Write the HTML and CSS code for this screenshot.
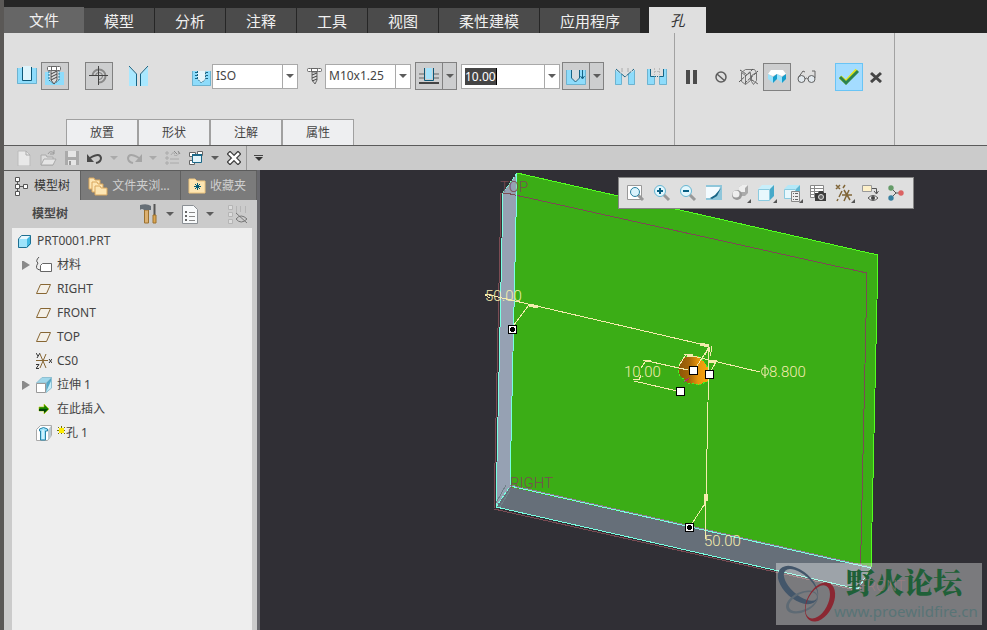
FILE: index.html
```html
<!DOCTYPE html>
<html lang="zh-CN">
<head>
<meta charset="utf-8">
<title>PRT0001</title>
<link rel="stylesheet" href="styles.css">
</head>
<body>
<nav class="menu">
  <button class="menu-tab file">文件</button>
  <button class="menu-tab">模型</button>
  <button class="menu-tab">分析</button>
  <button class="menu-tab">注释</button>
  <button class="menu-tab">工具</button>
  <button class="menu-tab">视图</button>
  <button class="menu-tab wide">柔性建模</button>
  <button class="menu-tab wide">应用程序</button>
  <button class="menu-tab current">孔</button>
</nav>

<section class="ribbon">
  <div class="panel options">
    <div class="controls">
      <div class="group kinds">
        <button class="tool" aria-label="简单孔"><svg width="20" height="20"><path d="M0 2h20v16H0z" fill="#8edcfb"/><path d="M6 0h8v14H6z" fill="#dff4fb"/><path d="M.5 2v15.500h19V2" fill="none" stroke="#6db3d0"/><path d="M5.500 1v13.500h9V1" fill="none" stroke="#0d5878"/></svg></button>
        <button class="tool framed" aria-label="标准孔"><svg width="20" height="20"><path d="M0 6h19v13H0z" fill="#8edcfb"/><path d="M4 5v9l5 4 5-4V5" fill="#eee" stroke="#176485" stroke-dasharray="2 1"/><path d="M6 4h6v10l-3 4-3-4z" fill="#ddd" stroke="#555"/><path d="M6 8l6-3M6 11l6-3M6 14l6-3" stroke="#444"/><rect x="2.500" y=".5" width="4" height="4" rx="1" fill="#fff" stroke="#666"/><rect x="6.500" y=".5" width="5" height="4" fill="#fff" stroke="#666"/><rect x="11.500" y=".5" width="4" height="4" rx="1" fill="#fff" stroke="#666"/></svg></button>
      </div>
      <button class="tool framed" aria-label="轴向"><svg width="20" height="20" fill="none" stroke="#555"><path d="M3.500 10A6.500 6.500 0 0 1 16.500 10A6.500 6.500 0 0 1 10 16.500" stroke="#888" stroke-width="2"/><path d="M6.500 10A3.500 3.500 0 0 1 13.500 10A3.500 3.500 0 0 1 10 13.500" stroke="#777"/><path d="M9.500 0v19M0 9.500h19" stroke="#444"/></svg></button>
      <button class="tool" aria-label="沉头"><svg width="20" height="20"><path d="M0 1l7 7v12H0zM19 1l-7 7v12h7z" fill="#a9e8ff"/><path d="M0 0l7.500 8v12M19 0l-7.500 8v12" fill="none" stroke="#176485"/></svg></button>
      <div class="group series">
        <label class="pick"><svg width="20" height="20"><path d="M0 5h19v15H0z" fill="#8edcfb"/><path d="M5 5h9v8l-4 4-5-4z" fill="#e6f4f9"/><path d="M.5 5v14.500h18V5" fill="none" stroke="#6db3d0"/><path d="M5.500 5v8l4 4 4-4V5" fill="none" stroke="#176485" stroke-dasharray="2 1"/><path d="M3 6.500h2M3 9.500h2M3 12.500h2M14 6.500h2M14 9.500h2M14 12.500h2" stroke="#176485"/></svg>
          <span class="combo"><select aria-label="螺纹系列"><option>ISO</option></select><i class="drop"></i></span></label>
        <label class="pick screw"><svg width="16" height="18"><path d="M5 5h5v8l-2 4-3-4z" fill="#ddd" stroke="#666"/><path d="M5 8l5-2M5 11l5-2M5 14l5-2" stroke="#444"/><rect x=".5" y="1.500" width="4" height="3" rx="1" fill="#fff" stroke="#666"/><rect x="4.500" y="1.500" width="6" height="3" fill="#fff" stroke="#666"/><rect x="10.500" y="1.500" width="4" height="3" rx="1" fill="#fff" stroke="#666"/></svg>
          <span class="combo"><select aria-label="螺钉尺寸"><option>M10x1.25</option></select><i class="drop"></i></span></label>
      </div>
      <div class="group depth">
        <button class="split" aria-label="深度选项"><span><svg width="20" height="18"><path d="M0 7h20M0 11h20" stroke="#999" stroke-width="2"/><path d="M0 16h20" stroke="#444" stroke-width="2"/><path d="M5 1h10v13H5z" fill="#cdcecf"/><path d="M7 1h6v11H7z" fill="#a5e2fa"/><path d="M5.500 1v12.500h9V1" fill="none" stroke="#0d5878"/></svg></span><i class="drop"></i></button>
        <span class="combo deep"><input value="10.00" aria-label="深度"><i class="drop"></i></span>
      </div>
      <button class="split shape" aria-label="钻孔形状"><span><svg width="20" height="18"><path d="M0 3h20v15H0z" fill="#8edcfb"/><path d="M5 3h9v8l-4 4-5-4z" fill="#d5dce0"/><path d="M.5 3v14.500h19V3" fill="none" stroke="#6db3d0"/><path d="M5.500 3v8l4 4 4-4V3M16.500 3v8M14.500 9l2 3 2-3" fill="none" stroke="#176485"/></svg></span><i class="drop"></i></button>
      <div class="group sinks">
        <button class="tool" aria-label="添加埋头孔"><svg width="20" height="20"><path d="M0 4l6 4v11H0zM20 4l-6 4v11h6z" fill="#8edcfb"/><path d="M.5 4v14.500h6V8M19.500 4v14.500h-6V8" fill="none" stroke="#6db3d0"/><path d="M7 2v4M13 2v4" stroke="#aaa"/><path d="M1 3l9 8 9-8" fill="none" stroke="#176485" stroke-dasharray="6 1"/></svg></button>
        <button class="tool" aria-label="添加沉孔"><svg width="20" height="20"><path d="M0 3h3v7h4v9H0zM20 3h-3v7h-4v9h7z" fill="#8edcfb"/><path d="M.5 3v15.500h7V10M19.500 3v15.500h-7V10" fill="none" stroke="#6db3d0"/><path d="M7.500 2v7M12.500 2v7M7 5.500h6" stroke="#bbb" stroke-dasharray="2 1"/><path d="M3.500 3v7.500h4M12.500 10.500h4V3" fill="none" stroke="#176485"/><path d="M8 10.500h4" stroke="#176485" stroke-dasharray="1 1"/></svg></button>
      </div>
    </div>
    <div class="subtabs">
      <button>放置</button><button>形状</button><button>注解</button><button>属性</button>
    </div>
  </div>
  <div class="panel finish">
    <div class="group preview">
      <button class="tool pause" aria-label="暂停"><svg width="12" height="16"><path d="M0 1h4v14H0zM7 1h4v14H7z" fill="#4b4b4b"/></svg></button>
      <button class="tool" aria-label="无预览"><svg width="14" height="14" fill="none" stroke="#5d5d5d" stroke-width="1.500"><circle cx="7" cy="7" r="5"/><path d="M3 4l8 7"/></svg></button>
      <button class="tool" aria-label="分离"><svg width="20" height="18" fill="none" stroke="#777"><path d="M2.500 4.500l4 3v9l-4-3zM6.500 7.500l5-3v8l-5 4M12.500 7.500l5-3v8l-3 4-2-3zM2.500 4.500l4-3h9l2 3"/><path d="M0 14L14 1M6 15L19 3M1 2l6 4M13 12l6 4" stroke="#555" stroke-dasharray="3 1"/></svg></button>
      <button class="tool framed tight" aria-label="连接"><svg width="20" height="18"><path d="M1 6l3-4h12l3 4-4 2-5-2-4 2z" fill="#fff"/><path d="M1 6l5 3v6l-5-4zM10 6l5 3v6l-5-4z" fill="#9be2fb"/><path d="M6 9l4-3v5l-4 4zM15 9l4-3v5l-4 4z" fill="#169dcc"/></svg></button>
      <button class="tool" aria-label="特征预览"><svg width="20" height="16" fill="#e2e9ee" stroke="#626262"><circle cx="4.500" cy="10" r="3.500"/><circle cx="14.500" cy="10" r="3.500"/><path d="M8 10q1-2 3 0M1 9l5-7 2 1M18 9V2h-3" fill="none"/></svg></button>
    </div>
    <div class="group close">
      <button class="tool ok" aria-label="确定"><svg width="20" height="18"><path d="M1 9l6 5L18 2" fill="none" stroke="#dfe51b" stroke-width="4"/><path d="M1 9l6 6L19 3" fill="none" stroke="#2b8352" stroke-width="3"/></svg></button>
      <button class="tool" aria-label="取消"><svg width="12" height="12"><path d="M1 2l10 9M11 2L1 11" stroke="#454545" stroke-width="3"/></svg></button>
    </div>
  </div>
  <div class="panel rest"></div>
</section>

<section class="quick">
  <button aria-label="新建"><svg width="16" height="16"><path d="M2 1h8l4 4v11H2z" fill="#e8e8e8" stroke="#bbb"/><path d="M10 1v4h4" fill="none" stroke="#aaa"/></svg></button>
  <button aria-label="打开"><svg width="18" height="16"><path d="M2 15V5h5l1 2h6v8z" fill="#ddd" stroke="#aaa"/><path d="M2 15l3-6h12l-3 6z" fill="#e5e5e5" stroke="#aaa"/><path d="M9 4q2-4 6-1M15 0v4h-4" fill="none" stroke="#999"/></svg></button>
  <button aria-label="保存"><svg width="16" height="16"><path d="M1 1h14v14H1z" fill="#aaa"/><path d="M4 1h8v6H4zM4 10h8v5H4z" fill="#e5e5e5"/><path d="M5 11h2v4H5z" fill="#999"/></svg></button>
  <button aria-label="撤消"><svg width="16" height="14"><path d="M3 7q10-6 11 0 0 4-5 5" fill="none" stroke="#494949" stroke-width="2"/><path d="M0 3v8h7z" fill="#494949"/></svg></button>
  <i class="drop pale"></i>
  <button aria-label="重做"><svg width="16" height="14"><path d="M13 7Q3 1 2 7q0 4 5 5" fill="none" stroke="#a5a5a5" stroke-width="2"/><path d="M16 3v8H9z" fill="#a5a5a5"/></svg></button>
  <i class="drop pale"></i>
  <button aria-label="再生"><svg width="16" height="16" fill="none" stroke="#aaa"><path d="M1 2h2v2H1zM1 7h2v2H1zM1 12h2v2H1zM5 9h9M5 13h9M6 5q2-4 4-1M14 2q-1 5-5 3"/><path d="M9 1l3 3M13 1l2 3" stroke="#888"/></svg></button>
  <button aria-label="窗口"><svg width="16" height="16"><path d="M1.500 2.500h6v4h-6zM9.500 1.500h5v4h-5zM1.500 10.500h5v4h-5z" fill="#fff" stroke="#666"/><path d="M4.500 4.500h9v8h-9z" fill="#e3f4fa" stroke="#1b6787"/><path d="M4 5h10" stroke="#1b6787" stroke-width="2"/></svg></button>
  <i class="drop"></i>
  <button aria-label="关闭"><svg width="14" height="14"><path d="M3 3l8 8M11 3l-8 8" stroke="#3e3e3e" stroke-width="5" stroke-linecap="square"/><path d="M3 3l8 8M11 3l-8 8" stroke="#fff" stroke-width="2.500" stroke-linecap="square"/></svg></button>
  <button class="more" aria-label="自定义"><svg width="10" height="8"><path d="M0 1.500h9" stroke="#444"/><path d="M1 3h8L5 7z" fill="#333"/></svg></button>
</section>

<div class="work">
  <aside class="side">
    <div class="side-tabs">
      <button class="on"><svg width="16" height="20" fill="#fff" stroke="#555"><path d="M3.500 4v12M3 10.500h6" fill="none"/><path d="M1.500 1.500h4v4h-4zM1.500 8.500h4v4h-4zM1.500 15.500h4v4h-4zM9.500 8.500h4v4h-4z"/></svg>模型树</button>
      <button><svg width="20" height="20" fill="#fde5b2" stroke="#d9a75f"><path d="M1 2h5l1 2h5v9H1z"/><path d="M4 6h5l1 2h5v8H4z"/><path d="M7 10h5l1 2h6v7H7z"/></svg>文件夹浏...</button>
      <button><svg width="18" height="18"><path d="M1 2h6l2 2h8v12H1z" fill="#fde5b2" stroke="#edc57f"/><path d="M9.500 6v7M6 9.500h7M7 7l5 5M12 7l-5 5" stroke="#005b78"/></svg>收藏夹</button>
    </div>
    <div class="tree-head">
      <span>模型树</span>
      <button aria-label="设置"><svg width="18" height="20"><path d="M4.500 6h4v13h-4z" fill="#dcb070" stroke="#9b712e"/><path d="M0 1q7-2 11 1v4H4Q2 4 0 6z" fill="#666f77"/><path d="M14.500 0v12" stroke="#555" stroke-width="2"/><path d="M13 11h3v8h-3z" fill="#dca650" stroke="#9b712e"/></svg></button>
      <i class="drop"></i>
      <button aria-label="显示"><svg width="16" height="19"><path d="M.5.5h11l4 4v14H.5z" fill="#f8fafb" stroke="#8a8f94"/><path d="M3 7h2M3 11h2M3 15h2" stroke="#666" stroke-width="2"/><path d="M7 7.500h6M7 11.500h6M7 15.500h6" stroke="#888"/></svg></button>
      <i class="drop"></i>
      <button class="hide" aria-label="隐藏"><svg width="20" height="20" fill="none" stroke="#b5b5b5"><path d="M1.500 1.500h4v4h-4zM1.500 8.500h4v4h-4zM1.500 15.500h4v4h-4z" fill="#ddd"/><path d="M9.500 2v8M13.500 2v6M18.500 2v7"/><path d="M9 15q5-6 11 0-6 6-11 0M9 9l11 10" stroke="#777"/></svg></button>
    </div>
    <ul class="tree">
      <li class="root"><svg width="15" height="15"><path d="M1 5l3-4h10l-4 4z" fill="#e8f8fe"/><path d="M1 5h9v9H1z" fill="#9de3fb"/><path d="M10 5l4-4v9l-4 4z" fill="#42b9e2"/><path d="M1.500 5l3-3.500h9v8l-4 4h-8z" fill="none" stroke="#1f6f91"/></svg>PRT0001.PRT</li>
      <li><button class="twist" aria-label="展开"></button><svg width="16" height="16"><path d="M3 0Q-1 4 2 6-2 12 4 13" fill="none" stroke="#555"/><path d="M4.500 8.500l2-2h9v8h-11z" fill="#fff" stroke="#666"/></svg>材料</li>
      <li><i></i><svg width="16" height="16"><path d="M4.500 3.500h10l-4 9H.5z" fill="#f4f0e8" stroke="#876633"/></svg>RIGHT</li>
      <li><i></i><svg width="16" height="16"><path d="M4.500 3.500h10l-4 9H.5z" fill="#f4f0e8" stroke="#876633"/></svg>FRONT</li>
      <li><i></i><svg width="16" height="16"><path d="M4.500 3.500h10l-4 9H.5z" fill="#f4f0e8" stroke="#876633"/></svg>TOP</li>
      <li><i></i><svg width="16" height="16" fill="none"><path d="M0 7.500h12M4 1l6 14M10 1L4 15" stroke="#876633"/><path d="M0 0l2 3M4 0L1 5M0 11.500h3l-3 4h3M13 6l3 4M16 6l-3 4" stroke="#333"/></svg>CS0</li>
      <li><button class="twist" aria-label="展开"></button><svg width="16" height="16"><path d="M.5 6L6 .5h9.500L10 6z" fill="#9fd7ea" stroke="#8fc0d2"/><path d="M10 6l5.500-5.500V11L10 15.500z" fill="#55a9c8" stroke="#8fc0d2"/><path d="M10 15l5-11v7z" fill="#c5edf9"/><path d="M.5 6.500h9v9h-9z" fill="#fff" stroke="#999"/></svg>拉伸 1</li>
      <li><i></i><svg width="16" height="16"><path d="M3 6h5V3l5 5-5 5v-3H3z" fill="#178200" stroke="#b5c900" stroke-width=".6"/><path d="M3 8h9l-4 4v-2H3z" fill="#06460b"/></svg>在此插入</li>
      <li class="hole"><i></i><svg width="16" height="16"><path d="M.5 4.500l4-4h11v10l-4 5H.5z" fill="#fff" stroke="#aaa"/><path d="M12 5l3-4v10l-3 4z" fill="#bac9d0"/><path d="M3.500 4q4-3 8 0v2h-2v9h-5V6h-1z" fill="#9de3fb" stroke="#2583a8"/><path d="M7 5v9" stroke="#fff"/></svg><svg class="spark" width="9" height="9"><path d="M4.500 0v8M0 4.500h8M1 1l7 7M8 1L1 8" stroke="#777500"/><path d="M2 2h5v5H2z" fill="#ffed00"/></svg>孔 1</li>
    </ul>
  </aside>
  <main class="view">
    <svg class="scene" viewBox="260 170 727 460" preserveAspectRatio="xMinYMin slice" role="img" aria-label="模型">
      <defs><linearGradient id="bore"><stop offset="0" stop-color="#8a5507"/><stop offset=".35" stop-color="#a56508"/><stop offset=".65" stop-color="#e8950d"/><stop offset="1" stop-color="#f9a70e"/></linearGradient></defs>
      <g shape-rendering="crispEdges">
        <path d="M517 173L878 255 871 568 510 487z" fill="#3bad16"/>
        <path d="M517 173L503 193 496 507 510 487z" fill="#96a1b3"/>
        <path d="M496 507L510 487 871 568 858 589z" fill="#666f79"/>
        <path d="M517 173L878 255 871 568" fill="none" stroke="#53ff1f"/>
        <path d="M501 193h5L867 273 860 591 494 509z" fill="none" stroke="#7b4b53"/>
        <path d="M510 485L871 567" stroke="#8d7c8d"/>
        <path d="M503 193L496 507 858 589 871 568 510 486 517 173" fill="none" stroke="#79ffe2"/>
        <path d="M517 173L503 193M496 507L510 486" stroke="#79ffe2" stroke-dasharray="3 2"/>
        <path d="M496 503l10-18M500 507l10-17" stroke="#6f8189"/>
        <path d="M678 369L681 360 687 356 697 356 704 361 709 370 708 381 699 385 688 383 680 376z" fill="url(#bore)" stroke="#43f522" stroke-dasharray="2 2"/>
        <g fill="none" stroke="#f4ecae">
          <path d="M485 294L709 346 708 402 706 497 705 540M529 305L514 325M706 502L691 525M684 354L760 372M686 354L679 366M717 360L711 371M709 347L695 369M643 360L688 370M634 381L677 391M651 360l-6 2-4 6M641 375l-2 5-6-1M485 295l5 3M704 494v12M711 346v6"/>
          <path d="M529 305l9 2M700 344l9 2M687 355l6 1M709 361l7 1" stroke-width="3"/>
          <path d="M706 494v7" stroke-width="3"/><path d="M709 347l-4 8M709 347l2 9"/>
        </g>
        <path d="M684 382l5-4" stroke="#bd1883"/>
        <g fill="#fff" stroke="#000"><path d="M689.500 366.500h8v8h-8zM705.500 370.500h8v8h-8zM676.500 387.500h8v8h-8zM508.500 325.500h8v8h-8zM685.500 523.500h8v8h-8z"/></g>
        <path d="M511 327h3v1h1v3h-1v1h-3v-1h-1v-3h1zM688 525h3v1h1v3h-1v1h-3v-1h-1v-3h1z"/>
      </g>
      <g class="note"><text x="485" y="301">50.00</text><text x="624" y="377">10.00</text><text x="704" y="546">50.00</text><text x="769" y="377">8.800</text></g>
      <path d="M765 365v13M761.500 371.500a3.500 4 0 1 0 7 0a3.500 4 0 1 0-7 0" fill="none" stroke="#f4ecae"/>
      <g class="datum"><text x="500" y="192">TOP</text><text x="510" y="488">RIGHT</text></g>
      <path d="M776 563h206v62H776z" fill="#fff" fill-opacity=".36"/>
      <g fill-rule="evenodd">
        <path transform="rotate(42 798 585)" d="M774 585a24 14 0 1 0 48 0a24 14 0 1 0-48 0M779 583a21 10 0 1 0 42 0a21 10 0 1 0-42 0" fill="#43566a"/>
        <path transform="rotate(-25 802 602)" d="M785 602a17 10 0 1 0 34 0a17 10 0 1 0-34 0M788 602a15 8 0 1 0 30 0a15 8 0 1 0-30 0" fill="#5e6a74"/>
        <path transform="rotate(-62 820 602)" d="M799 602a21 13 0 1 0 42 0a21 13 0 1 0-42 0M801 600a18 10 0 1 0 36 0a18 10 0 1 0-36 0" fill="#8b2732"/>
      </g>
      <text class="brand" x="846" y="594">野火论坛</text>
      <text class="datum faint" x="858" y="591">FRONT</text>
      <text class="site" x="834" y="617">www.proewildfire.cn</text>
    </svg>
    <div class="view-tools">
      <button aria-label="重新调整"><svg width="18" height="18"><path d="M.5 1.500h14v14H.5z" fill="#fff" stroke="#999"/><path d="M11 11l5 5" stroke="#999" stroke-width="3"/><circle cx="8" cy="8" r="4.500" fill="#d9f3fc" stroke="#287f9f"/></svg></button>
      <button aria-label="放大"><svg width="18" height="18"><path d="M10 10l6 6" stroke="#999" stroke-width="3"/><circle cx="7" cy="7" r="5.500" fill="#e3f7fd" stroke="#65b6d2"/><path d="M4 7h6M7 4v6" stroke="#075f84" stroke-width="2"/></svg></button>
      <button aria-label="缩小"><svg width="18" height="18"><path d="M10 10l6 6" stroke="#999" stroke-width="3"/><circle cx="7" cy="7" r="5.500" fill="#e3f7fd" stroke="#65b6d2"/><path d="M4 7h6" stroke="#075f84" stroke-width="2"/></svg></button>
      <button aria-label="重画"><svg width="18" height="18"><path d="M1 1h16v15H1z" fill="#8fc6da"/><path d="M1 3h14q-2 9-8 11H1z" fill="#f3fbff"/><path d="M5 14l5-3 6-7-4 8-5 3z" fill="#176485"/></svg></button>
      <button class="has-menu" aria-label="显示样式"><svg width="18" height="18"><path d="M8 3l3-2h6v8l-3 3H8z" fill="#aaa"/><path d="M8 3l3-2h6l-3 3v4H8z" fill="#eee"/><circle cx="6" cy="11" r="5" fill="#999"/><circle cx="5" cy="10" r="3.500" fill="#eee"/></svg></button>
      <button class="has-menu" aria-label="已保存方向"><svg width="18" height="18"><path d="M1 5l4-4h12l-4 4z" fill="#c9effb"/><path d="M13 5l4-4v11l-4 4z" fill="#46a9c9"/><path d="M1.500 5.500h11v11h-11z" fill="#e8f8fd" stroke="#8bcbe0"/></svg></button>
      <button class="has-menu" aria-label="视图管理器"><svg width="18" height="18"><path d="M1 5l4-4h12l-4 4z" fill="#b4e8f8"/><path d="M13 5l4-4v11l-4 4z" fill="#5eb7d3"/><path d="M1.500 5.500h11v9h-11z" fill="#e8f8fd" stroke="#8bcbe0"/><path d="M8.500 7.500h8v10h-8z" fill="#eee" stroke="#888"/><path d="M10 9.500h1M10 12.500h1M10 15.500h1M12 9.500h3M12 12.500h3M12 15.500h3" stroke="#666"/></svg></button>
      <button aria-label="图像"><svg width="18" height="18"><path d="M1.500 1.500h13v12h-13zM1 4.500h14M1 7.500h14M1 10.500h14M5.500 1v12" fill="#fff" stroke="#888"/><path d="M6 9h3l1-2h4l1 2h2v8H6z" fill="#3c3c3c"/><circle cx="12" cy="13" r="2.500" fill="#666" stroke="#ddd"/></svg></button>
      <button class="has-menu" aria-label="基准显示"><svg width="18" height="18" fill="none" stroke="#806537"><path d="M1 1l4 4M5 1L1 5M10 1L8 4M7 7L4 13M3 15l-1 2M7 11h10M9 6l6 10M14 6l-5 11" stroke-width="1.500"/></svg></button>
      <button aria-label="注释显示"><svg width="18" height="18"><path d="M1.500 1.500h9v6h-9z" fill="#fdf0c9" stroke="#999"/><path d="M11 4.500h4.500v5M13 7l2.500 3 2-3" fill="none" stroke="#555"/><path d="M7 14q5-5 10 0-5 5-10 0z" fill="#eee" stroke="#555"/><circle cx="12" cy="14" r="2" fill="#444"/></svg></button>
      <button aria-label="旋转中心"><svg width="18" height="18"><path d="M4 4l5 5h6M9 9l-5 5" fill="none" stroke="#555"/><circle cx="4" cy="4" r="2.700" fill="#659b68"/><circle cx="14" cy="9" r="2.700" fill="#db6262"/><circle cx="4" cy="14" r="2.700" fill="#377fa0"/></svg></button>
    </div>
  </main>
</div>
</body>
</html>
```
FILE: styles.css
```css
* { box-sizing: border-box; }

body {
  margin: 0;
  min-height: 100vh;
  display: flex;
  flex-direction: column;
  border-left: 4px solid #5a5856;
  background: #cbcbcb;
  color: #444;
  font: 12px/16px "Noto Sans", "Noto Sans CJK SC", sans-serif;
}

button {
  margin: 0;
  padding: 0;
  border: 0;
  background: none;
  color: inherit;
  font: inherit;
}

svg { display: block; flex: none; }

.drop {
  flex: none;
  width: 8px;
  height: 4px;
  background: #5c5c5c;
  clip-path: polygon(0 0, 100% 0, 50% 100%);
}
.drop.pale { background: #aaa; }

/* Menu tabs */
.menu {
  display: flex;
  align-items: flex-end;
  gap: 1px;
  padding-top: 7px;
  background: #262626;
}
.menu-tab {
  width: 70px;
  height: 25px;
  background: #4b4b4b;
  color: #f0f0f0;
  font-size: 15px;
  line-height: 22px;
}
.menu-tab.file { width: 80px; height: 26px; margin-right: -1px; background: #666; }
.menu-tab.wide { width: 100px; }
.menu-tab.current {
  width: 57px;
  height: 26px;
  margin-left: 8px;
  background: #dfdfdf;
  color: #333;
  font-style: italic;
}

/* Ribbon */
.ribbon {
  display: flex;
  height: 113px;
  background: #dfdfdf;
  border-bottom: 1px solid #5b5b5b;
}
.panel { border-right: 1px solid #a2a2a2; }
.options {
  display: flex;
  flex-direction: column;
  justify-content: space-between;
  padding: 29px 7px 0 13px;
}
.controls, .group, .pick { display: flex; align-items: center; }
.controls { gap: 16px; }
.kinds { gap: 4px; }
.series { gap: 9px; margin-left: 27px; }
.screw { gap: 2px; }
.depth { gap: 4px; margin-left: -12px; }
.shape { margin-left: -14px; }
.sinks { gap: 12px; margin-left: -5px; }
.tool { display: flex; align-items: center; justify-content: center; }
.framed, .ok { width: 28px; height: 28px; }
.framed { border: 1px solid #818181; background: #cdcecf; }
.ok { border: 1px solid #69c4f5; background: #a4dcff; }
.combo {
  display: flex;
  align-items: center;
  width: 86px;
  height: 25px;
  border: 1px solid #a9a9a9;
  background: linear-gradient(#a9a9a9, #a9a9a9) right 14px top / 1px 100% no-repeat, #fff;
}
.combo .drop { margin: 0 3px 0 4px; }
.combo select, .combo input {
  flex: 1;
  min-width: 0;
  height: 100%;
  padding: 0 0 0 3px;
  border: 0;
  outline: 0;
  appearance: none;
  background: none;
  color: #444;
  font: inherit;
}
.combo.deep { width: 99px; }
.combo input {
  flex: none;
  width: 32px;
  height: 17px;
  margin-left: 3px;
  padding: 0;
  border-right: 1px solid #000;
  background: #454545;
  color: #fff;
}
.combo.deep .drop { margin-left: auto; }
.split {
  display: flex;
  align-items: center;
  width: 42px;
  height: 28px;
  border: 1px solid #818181;
  background: #cdcecf;
}
.split span {
  display: flex;
  align-items: center;
  height: 100%;
  padding: 0 3px;
  border-right: 1px solid #818181;
}
.split .drop { margin-left: 3px; }
.subtabs { display: flex; margin-left: 49px; }
.subtabs button {
  width: 72px;
  height: 26px;
  border: 1px solid #a0a0a0;
  border-bottom: 0;
  background: #eeeff1;
}
.finish {
  display: flex;
  align-items: flex-start;
  gap: 18px;
  width: 220px;
  padding: 30px 0 0 11px;
}
.preview { gap: 11px; }
.pause { margin-right: 5px; }
.tight { margin: 0 -5px 0 -7px; }
.close { gap: 7px; }
.rest { border: 0; }

/* Quick access bar */
.quick {
  display: flex;
  align-items: center;
  gap: 7px;
  height: 24px;
  padding-left: 12px;
}
.quick .drop { margin-right: 1px; }
.quick .more {
  display: flex;
  align-items: center;
  height: 100%;
  margin-left: -2px;
  padding-left: 7px;
  border-left: 1px solid #999;
}

/* Work area */
.work { display: flex; flex: 1; }
.side {
  display: flex;
  flex-direction: column;
  width: 256px;
  border-right: 3px solid #68686d;
  background: #cbcbcb;
}
.side-tabs {
  display: flex;
  height: 30px;
  border-top: 1px solid #5b5b5b;
}
.side-tabs button {
  display: flex;
  align-items: center;
  gap: 4px;
  flex: 1 0 auto;
  padding: 0 7px;
  border-right: 1px solid #606060;
  background: #7b7b7b;
  color: #cfcfcf;
}
.side-tabs .on { padding-left: 10px; background: #cbcbcb; color: #333; }
.tree-head {
  display: flex;
  align-items: center;
  gap: 8px;
  height: 28px;
  padding-left: 28px;
}
.tree-head span { margin-right: 64px; font-weight: bold; color: #484848; }
.tree-head .hide { margin-left: 5px; }
.tree {
  flex: 1;
  margin: 0 5px 0 8px;
  padding: 1px 0 0;
  list-style: none;
  background: #eee;
}
.tree li {
  display: flex;
  align-items: center;
  gap: 5px;
  height: 24px;
  padding-left: 9px;
}
.tree .root { padding-left: 5px; }
.tree li > i, .twist { flex: none; width: 10px; height: 10px; }
.twist {
  background: linear-gradient(#8a8a8a, #8a8a8a) center / 8px 9px no-repeat;
  clip-path: polygon(10% 0, 90% 50%, 10% 100%);
}
.tree .spark { margin: -6px -5px 0 0; }

/* Graphics window */
.view { position: relative; flex: 1; min-width: 0; background: #302f35; }
.scene { position: absolute; inset: 0; width: 100%; height: 100%; }
.note, .datum { font: 300 15px Roboto, sans-serif; }
.note { fill: #f4ecae; }
.datum { fill: #7b4b53; }
.faint { fill: #ad8186; fill-opacity: .6; }
.brand { font: 900 29px "Noto Serif CJK SC", "Noto Sans CJK SC", serif; fill: #1f6038; }
.site { font: 15px "Noto Sans", sans-serif; fill: #587476; }
.view-tools {
  position: absolute;
  top: 7px;
  right: 73px;
  display: flex;
  align-items: center;
  gap: 8px;
  height: 32px;
  padding: 0 8px;
  border: 1px solid #858585;
  background: #dfdfdf;
}
.has-menu { position: relative; }
.has-menu::after {
  content: "";
  position: absolute;
  right: -2px;
  bottom: -1px;
  border: 2px solid #555;
  border-top-color: transparent;
  border-left-color: transparent;
}
```
